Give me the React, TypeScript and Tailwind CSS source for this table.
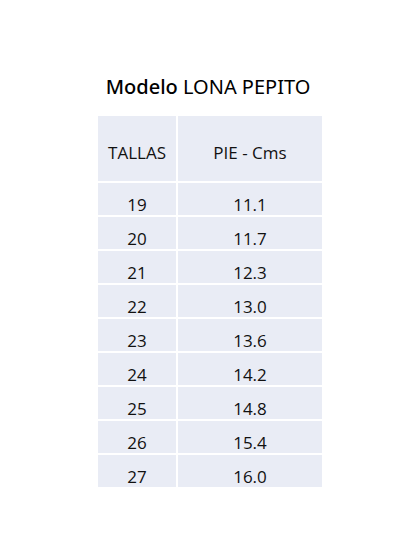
const rows: [string, string][] = [
  ["19", "11.1"],
  ["20", "11.7"],
  ["21", "12.3"],
  ["22", "13.0"],
  ["23", "13.6"],
  ["24", "14.2"],
  ["25", "14.8"],
  ["26", "15.4"],
  ["27", "16.0"],
];

export default function App() {
  return (
    <div className="w-[416px] h-[555px] bg-white flex flex-col items-center font-['Open_Sans',sans-serif] text-[#111]">
      <h1 className="mt-[72px] h-[30px] text-[20px] leading-[30px] font-['Noto_Sans',sans-serif] text-black">
        <span className="font-medium">Modelo</span> <span className="font-normal">LONA PEPITO</span>
      </h1>

      {/* size table */}
      <div className="mt-[14px] ml-[4px] w-[224px] bg-white grid grid-cols-[78px_1fr] gap-[2px] text-[17px]">
        <div className="h-[65px] pt-[8px] bg-[#e9ecf5] flex items-center justify-center">TALLAS</div>
        <div className="h-[65px] pt-[8px] bg-[#e9ecf5] flex items-center justify-center">PIE - Cms</div>
        {rows.map(([talla, cms]) => (
          <>
            <div key={talla} className="h-[32px] pt-[12px] bg-[#e9ecf5] flex items-center justify-center">{talla}</div>
            <div key={talla + "c"} className="h-[32px] pt-[12px] bg-[#e9ecf5] flex items-center justify-center">{cms}</div>
          </>
        ))}
      </div>
    </div>
  );
}
